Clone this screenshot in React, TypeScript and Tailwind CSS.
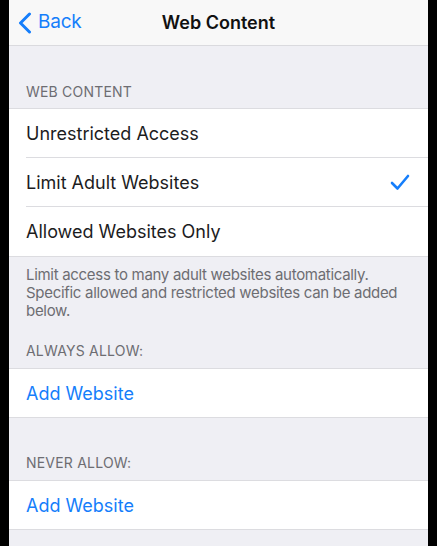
import React from 'react';

const font = { fontFamily: 'Inter, "Liberation Sans", sans-serif' };

const Check = () => (
  <svg width="20" height="17" viewBox="0 0 20 17" fill="none">
    <path d="M2 9 L7.5 14.5 L18 2" stroke="#157efb" strokeWidth="2.6" strokeLinecap="round" strokeLinejoin="round" />
  </svg>
);

const Chevron = () => (
  <svg width="14" height="22" viewBox="0 0 14 22" fill="none">
    <path d="M11.5 2 L2.5 11 L11.5 20" stroke="#157efb" strokeWidth="3" strokeLinecap="round" strokeLinejoin="round" />
  </svg>
);

const options = [
  { label: 'Unrestricted Access', checked: false },
  { label: 'Limit Adult Websites', checked: true },
  { label: 'Allowed Websites Only', checked: false },
];

export default function App() {
  return (
    <div className="h-[546px] w-[437px] bg-black px-[9px] overflow-hidden" style={font}>
      <div className="h-full bg-[#efeff4] flex flex-col">
        {/* Nav bar */}
        <div className="h-[46px] shrink-0 bg-[#f8f8f8] border-b border-[#dadade] relative flex items-center">
          <div className="flex items-center gap-[6px] pl-[9px] text-[#157efb] text-[19px] tracking-[-0.2px]">
            <Chevron />
            <span>Back</span>
          </div>
          <div className="absolute inset-0 flex items-center justify-center text-[18px] font-semibold text-[#111]">
            Web Content
          </div>
        </div>

        <div className="h-[62px] shrink-0 flex items-end pb-[6px] pl-[17px] text-[14px] text-[#6d6d72] tracking-[0.2px]">
          WEB CONTENT
        </div>

        <div className="bg-white border-y border-[#dcdce0]">
          {options.map((o, i) => (
            <div key={o.label} className="pl-[17px]">
              <div
                className={`h-[49px] flex items-center justify-between pr-[18px] text-[18px] text-[#1c1c1e] ${
                  i < options.length - 1 ? 'border-b border-[#dcdce0]' : ''
                }`}
              >
                <span>{o.label}</span>
                {o.checked && <Check />}
              </div>
            </div>
          ))}
        </div>

        <div className="pt-[9px] pl-[17px] pr-[12px] text-[15px] leading-[18px] tracking-[-0.3px] text-[#6d6d72]">
          Limit access to many adult websites automatically. Specific allowed and restricted websites can be added below.
        </div>

        <div className="h-[48px] shrink-0 flex items-end pb-[7px] pl-[17px] text-[14px] text-[#6d6d72] tracking-[0.2px]">
          ALWAYS ALLOW:
        </div>
        <div className="bg-white border-y border-[#dcdce0] h-[50px] flex items-center pl-[17px] text-[18px] text-[#157efb]">
          Add Website
        </div>

        <div className="h-[62px] shrink-0 flex items-end pb-[7px] pl-[17px] text-[14px] text-[#6d6d72] tracking-[0.2px]">
          NEVER ALLOW:
        </div>
        <div className="bg-white border-y border-[#dcdce0] h-[50px] flex items-center pl-[17px] text-[18px] text-[#157efb]">
          Add Website
        </div>
      </div>
    </div>
  );
}
